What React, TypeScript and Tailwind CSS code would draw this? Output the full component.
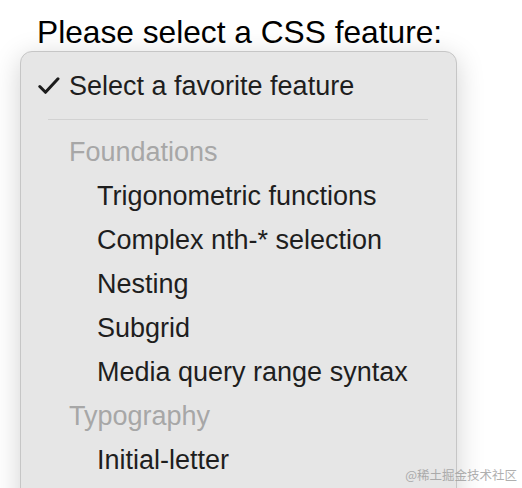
const groups = [
  {
    label: "Foundations",
    items: [
      "Trigonometric functions",
      "Complex nth-* selection",
      "Nesting",
      "Subgrid",
      "Media query range syntax",
    ],
  },
  {
    label: "Typography",
    items: ["Initial-letter"],
  },
];

function Check() {
  return (
    <svg width="22" height="18" viewBox="0 0 22 18" className="shrink-0">
      <path
        d="M1.8 9.5 L7.5 15.3 L20 1.8"
        fill="none"
        stroke="#1c1c1c"
        strokeWidth="3"
        strokeLinecap="round"
        strokeLinejoin="round"
      />
    </svg>
  );
}

export default function App() {
  return (
    <div
      className="relative h-[488px] w-[522px] overflow-hidden bg-white"
      style={{ fontFamily: '"Liberation Sans", Arial, sans-serif' }}
    >
      <div className="pt-[14px]">
        <h1 className="pl-[37px] text-[31.7px] leading-[36px] text-black">
          Please select a CSS feature:
        </h1>

        <div className="ml-[20px] mt-[1px] w-[437px] rounded-[12px] border border-[#c6c6c6] bg-[#e6e6e6] pt-[12px] pb-[40px] shadow-[0_6px_28px_rgba(0,0,0,0.18)]">
          <div className="flex h-[44px] items-center pl-[17px] text-[27px] text-[#1e1e1e]">
            <div className="w-[31px]">
              <Check />
            </div>
            <span>Select a favorite feature</span>
          </div>

          <div className="flex h-[22px] items-center pl-[27px] pr-[28px]">
            <div className="h-px w-full bg-[#d2d2d2]" />
          </div>

          {groups.map((g) => (
            <div key={g.label}>
              <div className="flex h-[44px] items-center pl-[48px] text-[27px] text-[#a7a7a7]">
                {g.label}
              </div>
              {g.items.map((item) => (
                <div
                  key={item}
                  className="flex h-[44px] items-center pl-[76px] text-[27px] text-[#1e1e1e]"
                >
                  {item}
                </div>
              ))}
            </div>
          ))}
        </div>
      </div>

      <div
        className="absolute right-[5px] bottom-[3px] text-[12.5px] text-[#9c9c9c] opacity-80"
        style={{ fontFamily: '"Noto Sans CJK SC", sans-serif' }}
      >
        @稀土掘金技术社区
      </div>
    </div>
  );
}
